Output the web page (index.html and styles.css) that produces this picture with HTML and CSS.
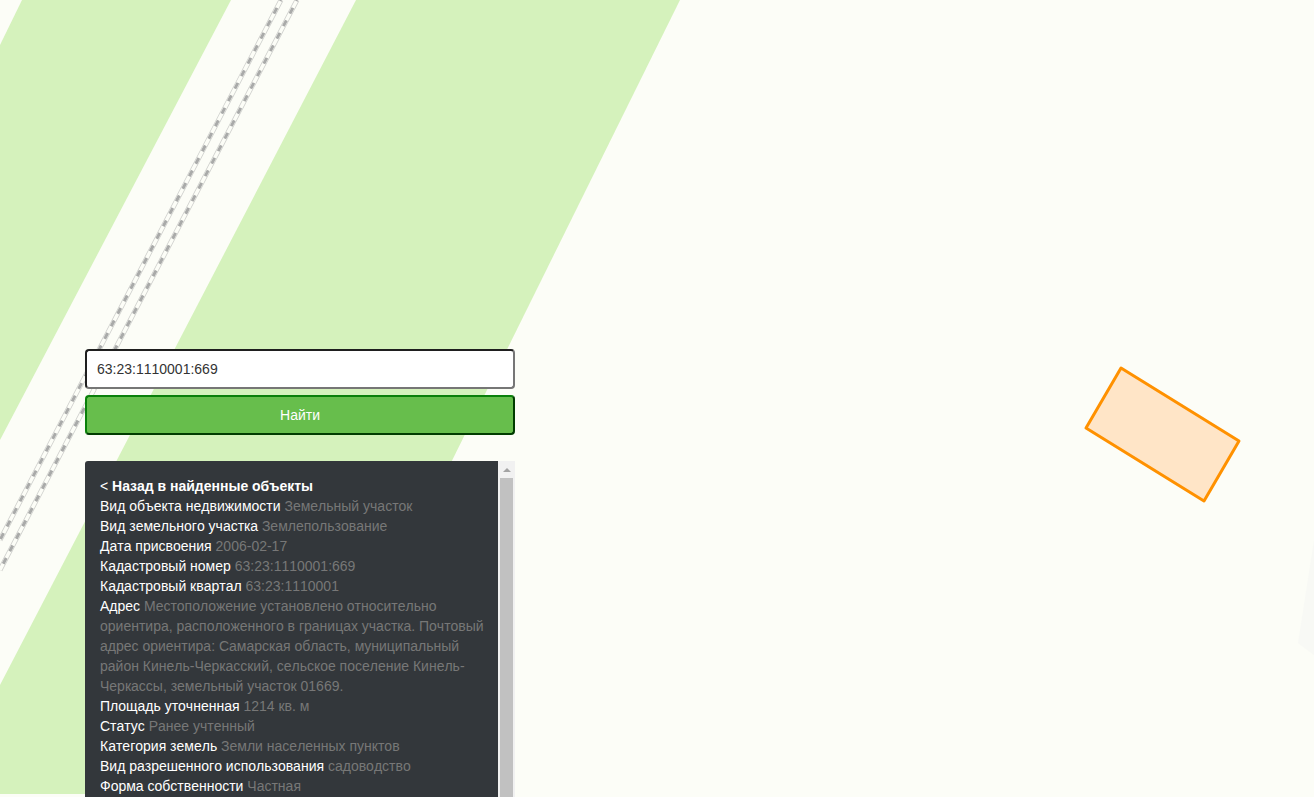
FILE: index.html
```html
<!DOCTYPE html>
<html lang="ru">
<head>
    <meta charset="UTF-8">
    <meta name="viewport" content="width=device-width, initial-scale=1.0">
    <title>Поиск по кадастровому номеру</title>
    <link rel="stylesheet" href="styles.css">
</head>
<body>

    <!-- Map -->
    <svg class="map" width="1314" height="797" viewBox="0 0 1314 797">
        <polygon class="land" points="22,0 231,0 0,440 0,45"/>
        <polygon class="land" points="356,0 680,0 287,794 0,794 0,685"/>
        <polygon class="building" points="1314,540 1298,643 1314,655"/>
        <g class="railway">
            <path class="rail-edge" d="M281 0 L0 540 M297 0 L0 570"/>
            <path class="rail-inner" d="M281 0 L0 540 M297 0 L0 570"/>
            <path class="rail-dash" d="M281 0 L0 540 M297 0 L0 570"/>
        </g>
        <polygon class="parcel" points="1121,368 1239,441 1204,501 1086,428"/>
    </svg>

    <!-- Search Section -->
    <div class="search-box">
        <input type="text" class="search-input" value="63:23:1110001:669">
        <button class="search-btn">Найти</button>

        <!-- Object info -->
        <div class="info">
            <div class="info-text">
                <a href="#back" class="back">&lt; <b>Назад в найденные объекты</b></a>
                <div>Вид объекта недвижимости <span>Земельный участок</span></div>
                <div>Вид земельного участка <span>Землепользование</span></div>
                <div>Дата присвоения <span>2006-02-17</span></div>
                <div>Кадастровый номер <span>63:23:1110001:669</span></div>
                <div>Кадастровый квартал <span>63:23:1110001</span></div>
                <div>Адрес <span>Местоположение установлено относительно ориентира, расположенного в границах участка. Почтовый адрес ориентира: Самарская область, муниципальный район Кинель-Черкасский, сельское поселение Кинель-Черкассы, земельный участок 01669.</span></div>
                <div>Площадь уточненная <span>1214 кв. м</span></div>
                <div>Статус <span>Ранее учтенный</span></div>
                <div>Категория земель <span>Земли населенных пунктов</span></div>
                <div>Вид разрешенного использования <span>садоводство</span></div>
                <div>Форма собственности <span>Частная</span></div>
            </div>
            <div class="scrollbar">
                <div class="scroll-up"></div>
                <div class="scroll-thumb"></div>
            </div>
        </div>
    </div>

</body>
</html>
```

FILE: styles.css
```css
html, body {
    height: 100%;
}

body {
    margin: 0;
    overflow: hidden;
    background-color: #fcfdf7;
    font-family: "Liberation Sans", Arial, sans-serif;
    font-size: 14px;
    font-kerning: none;
}

/* Map */
.map {
    position: absolute;
    left: 0;
    top: 0;
}

.land {
    fill: #d5f2bc;
}

.building {
    fill: #f8f9f5;
}

.railway {
    fill: none;
}

.rail-edge {
    stroke: #d0d1ce;
    stroke-width: 5;
}

.rail-inner {
    stroke: #fcfdf7;
    stroke-width: 3.4;
}

.rail-dash {
    stroke: #a9aaa9;
    stroke-width: 3;
    stroke-dasharray: 6.5 7.6;
    stroke-dashoffset: 5.25;
}

.parcel {
    fill: #ffe5c7;
    stroke: #ff9100;
    stroke-width: 3;
    stroke-linejoin: round;
}

/* Search */
.search-box {
    position: absolute;
    left: 85px;
    top: 349px;
    width: 430px;
    display: flex;
    flex-direction: column;
}

.search-input {
    box-sizing: border-box;
    height: 40px;
    padding: 0 10px;
    border-width: 2px;
    border-style: solid;
    border-color: #1f1f1f #767676 #767676 #1f1f1f;
    border-radius: 4px;
    background: white;
    color: #333;
    font-family: inherit;
    font-size: 14px;
    font-kerning: none;
}

.search-btn {
    box-sizing: border-box;
    height: 40px;
    margin-top: 6px;
    border-width: 2px;
    border-style: solid;
    border-color: #0a800a #003c00 #003c00 #0a800a;
    border-radius: 4px;
    background: #67be4c;
    color: white;
    font-family: inherit;
    font-size: 14px;
    cursor: pointer;
}

/* Info panel */
.info {
    display: flex;
    height: 336px;
    margin-top: 26px;
    overflow: hidden;
}

.info-text {
    flex: 1;
    padding: 15px 10px 0 15px;
    border-top-left-radius: 3px;
    background: #33373b;
    color: white;
    line-height: 20px;
}

.info-text span {
    color: #777;
}

.back {
    display: block;
    color: white;
    text-decoration: none;
}

.scrollbar {
    width: 17px;
    background: #f1f1f1;
}

.scroll-up {
    width: 0;
    height: 0;
    margin: 7px auto 0;
    border-left: 4px solid transparent;
    border-right: 4px solid transparent;
    border-bottom: 4px solid #a3a3a3;
}

.scroll-thumb {
    height: 319px;
    margin: 6px 2px 0;
    background: #c1c1c1;
}
```
